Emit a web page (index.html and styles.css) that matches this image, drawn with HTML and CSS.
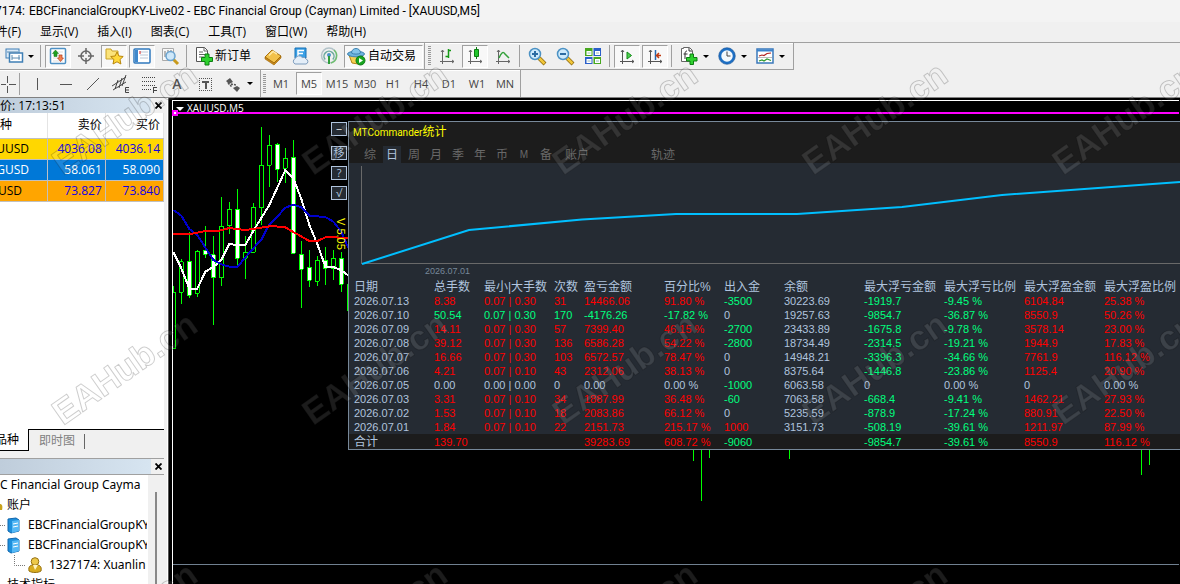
FILE: index.html
```html
<!DOCTYPE html>
<html lang="zh-CN">
<head>
<meta charset="utf-8">
<title>EBC Financial Group - XAUUSD,M5</title>
<link rel="stylesheet" href="styles.css">
</head>
<body>
<header class="titlebar"><span class="lead lead-title">7174:</span><span>EBCFinancialGroupKY-Live02 - EBC Financial Group (Cayman) Limited - [XAUUSD,M5]</span></header>
<nav class="menu">
<button class="lead lead-menu">件(F)</button><button>显示(V)</button><button>插入(I)</button><button>图表(C)</button><button>工具(T)</button><button>窗口(W)</button><button>帮助(H)</button>
</nav>

<div class="toolbar">
<div class="group group-main">
<button class="tool" aria-label="新图表"><svg width="20" height="20" viewBox="0 0 20 20"><rect x="2" y="3" width="13" height="9" fill="#dcebf8" stroke="#3f7fb5"/><rect x="5.500" y="7" width="13" height="9" fill="#fff" stroke="#3f7fb5" stroke-width="1.500"/><path d="M8 9v5M15 9v5M8 12h8M3 6h11" stroke="#5a8ab0" fill="none"/></svg></button>
<button class="drop" aria-label="图表列表"></button>
<i class="sep"></i>
<button class="tool on" aria-label="市场报价"><svg width="20" height="20" viewBox="0 0 20 20"><rect x="2.500" y="2.500" width="15" height="15" rx="1" fill="#fff" stroke="#4d90c4" stroke-width="1.500"/><path d="M5 6h10M5 9h10M5 12h10M5 15h10" stroke="#ddd"/><path d="M7.500 4l3 3.500H9v3H6v-3H4.500z" fill="#20a020" stroke="#107010" stroke-width=".5"/><path d="M12.500 15.500l-3-3.500H11V9h3v3h1.500z" fill="#f08050" stroke="#b03010" stroke-width=".6"/></svg></button>
<button class="tool" aria-label="数据窗口"><svg width="20" height="20" viewBox="0 0 20 20" fill="none" stroke="#666"><circle cx="10" cy="10" r="5" stroke-width="1.500"/><path d="M10 2v6M10 12v6M2 10h6M12 10h6" stroke-width="1.500"/></svg></button>
<button class="tool on" aria-label="导航"><svg width="20" height="20" viewBox="0 0 20 20"><path d="M2 13V3h5l1 2h6v8z" fill="#fbe37a" stroke="#c9a227"/><path d="M13 6l1.900 4 4.300.5-3.200 3 .9 4.500-3.900-2.200L9 18l.9-4.500-3.200-3 4.400-.5z" fill="#ffd83a" stroke="#b8860b"/></svg></button>
<button class="tool on" aria-label="终端"><svg width="20" height="20" viewBox="0 0 20 20"><rect x="2" y="3" width="16" height="14" rx="1" fill="#fff" stroke="#2f78bd" stroke-width="1.500"/><path d="M3 4h3v12H3z" fill="#3f88cc"/><path d="M8 6h8M8 9h8M8 12h8" stroke="#b9c6d6"/><path d="M8 5v3" stroke="#e02020"/></svg></button>
<button class="tool" aria-label="策略测试"><svg width="20" height="20" viewBox="0 0 20 20"><path d="M2.500 2.500h11v12h-11z" fill="#f8f8f8" stroke="#aaa"/><path d="M5 5v6M8 4v5M11 4v3" stroke="#777"/><path d="M13.500 13.500l4.500 4.500" stroke="#c89a1c" stroke-width="3"/><circle cx="10.500" cy="10" r="4.500" fill="#c9e6fa" fill-opacity=".9" stroke="#6aa3cf" stroke-width="1.500"/></svg></button>
<i class="sep"></i>
<button class="tool wide" aria-label="新订单"><svg width="20" height="20" viewBox="0 0 20 20"><path d="M2.500 1.500h8l3 3v11h-11z" fill="#fff" stroke="#555"/><path d="M10 1.500v3.500h3.500M5 6h4M5 8.500h6M5 11h5" stroke="#666" fill="none"/><path d="M11 8h4v3.500h3.500v4H15V19h-4v-3.500H7.500v-4H11z" fill="#2ed12e" stroke="#0d7d12"/></svg><span>新订单</span></button>
<button class="tool" aria-label="MetaEditor"><svg width="20" height="20" viewBox="0 0 20 20"><path d="M2 11l7-7 9 6-7 7z" fill="#f2c14a" stroke="#a8700e"/><path d="M2 11v2l9 6 7-7v-2l-7 7z" fill="#c98a17" stroke="#9a640c" stroke-width=".6"/><path d="M6 9.500l4-4 4 2.700" stroke="#ffe9a5" fill="none" stroke-width="1.500"/></svg></button>
<button class="tool" aria-label="社区"><svg width="20" height="20" viewBox="0 0 20 20"><path d="M4 2h11v10H4z" fill="#3aa0e6" stroke="#1670b5"/><path d="M7 12V4.500h6M7 7.500h5" stroke="#fff" stroke-width="1.500" fill="none"/><path d="M4 18a3 3 0 0 1 .3-5.500 4 4 0 0 1 7-1 3 3 0 0 1 3.700 1.500 2.600 2.600 0 0 1 0 5z" fill="#e4eef8" stroke="#7d9cbd"/></svg></button>
<button class="tool" aria-label="信号"><svg width="20" height="20" viewBox="0 0 20 20" fill="none"><circle cx="10" cy="9.500" r="7.500" stroke="#b3c3c9" stroke-width="1.500"/><path d="M6.200 13.500a5 5 0 1 1 7.600 0" stroke="#6eaa9f" stroke-width="1.500"/><path d="M15 4a7.500 7.500 0 0 1-3 13" stroke="#6fbf6f" stroke-width="1.500"/><circle cx="10" cy="9" r="2" fill="#4b93c9"/><path d="M10 10v8" stroke="#2f9e3c" stroke-width="2"/></svg></button>
<button class="tool on auto"><svg width="20" height="20" viewBox="0 0 20 20"><path d="M3 9l3 8 6 1 5-9z" fill="#f5cf52" stroke="#b08414"/><ellipse cx="10" cy="8" rx="8.500" ry="2.800" fill="#6db3de" stroke="#3d82b0"/><path d="M5.500 7c0-6 9-6 9 0-2 1.500-7 1.500-9 0z" fill="#84c4ea" stroke="#3d82b0"/><circle cx="14.500" cy="14.500" r="4.500" fill="#19a51f" stroke="#0d7a15"/><path d="M13 12l4 2.500-4 2.500z" fill="#fff"/></svg><span>自动交易</span></button>
</div>
<div class="group group-chart">
<i class="grip"></i>
<button class="tool" aria-label="柱状图"><svg width="20" height="20" viewBox="0 0 20 20" fill="none" stroke="#666"><path d="M5.500 4v14M3 15.500h14M4 6l1.500-2L7 6M15 14l2 1.500-2 1.500"/><path d="M11.500 3v9M8.500 10.500h3M11.500 4.500H14" stroke="#159915" stroke-width="1.500"/></svg></button>
<button class="tool on" aria-label="蜡烛图"><svg width="20" height="20" viewBox="0 0 20 20" fill="none" stroke="#666"><path d="M5.500 4v14M3 15.500h14M4 6l1.500-2L7 6M15 14l2 1.500-2 1.500"/><path d="M11.500 1v12" stroke="#0a7d10"/><path d="M9.500 3.500h4v7h-4z" fill="#21c52b" stroke="#0a7d10"/></svg></button>
<button class="tool" aria-label="折线图"><svg width="20" height="20" viewBox="0 0 20 20" fill="none" stroke="#666"><path d="M5.500 4v14M3 15.500h14M4 6l1.500-2L7 6M15 14l2 1.500-2 1.500"/><path d="M6 12c2-5 4-7 6-4l4 4" stroke="#32a03a" stroke-width="1.500"/></svg></button>
<i class="sep"></i>
<button class="tool" aria-label="放大"><svg width="20" height="20" viewBox="0 0 20 20"><path d="M12 12l6 6" stroke="#8f6a10" stroke-width="4"/><path d="M12 12l5.500 5.500" stroke="#f1c73a" stroke-width="2.500"/><circle cx="8" cy="8" r="5.500" fill="#cdeafc" stroke="#4c92c4" stroke-width="1.500"/><path d="M8 5v6M5 8h6" stroke="#2b6ca3" stroke-width="2"/></svg></button>
<button class="tool" aria-label="缩小"><svg width="20" height="20" viewBox="0 0 20 20"><path d="M12 12l6 6" stroke="#8f6a10" stroke-width="4"/><path d="M12 12l5.500 5.500" stroke="#f1c73a" stroke-width="2.500"/><circle cx="8" cy="8" r="5.500" fill="#cdeafc" stroke="#4c92c4" stroke-width="1.500"/><path d="M5 8h6" stroke="#2b6ca3" stroke-width="2"/></svg></button>
<button class="tool" aria-label="平铺"><svg width="20" height="20" viewBox="0 0 20 20"><path d="M2 2h7.500v8H2zM10.500 11H18v7h-7.500z" fill="#48a81f"/><path d="M10.500 2H18v8h-7.500zM2 11h7.500v7H2z" fill="#2a5fc9"/><path d="M3.500 5h5v4h-5zM12 5h5v4h-5zM3.500 13h5v4h-5zM12 13h5v4h-5z" fill="#fff"/><path d="M4.500 7h3M13 7h3M4.500 15h3M13 15h3" stroke="#9bb"/></svg></button>
<i class="sep"></i>
<button class="tool on" aria-label="自动滚动"><svg width="20" height="20" viewBox="0 0 20 20" fill="none" stroke="#555"><path d="M5.500 4v14M3 15.500h14M4 6l1.500-2L7 6M15 14l2 1.500-2 1.500"/><path d="M10 6l4.500 3.500L10 13z" fill="#4fd04f" stroke="#128a18"/></svg></button>
<button class="tool on" aria-label="图表平移"><svg width="20" height="20" viewBox="0 0 20 20" fill="none" stroke="#555"><path d="M5.500 4v14M3 15.500h14M4 6l1.500-2L7 6M15 14l2 1.500-2 1.500"/><path d="M10.500 4v10" stroke="#2468b0" stroke-width="1.500"/><path d="M16 9.500h-4M14 7l-2.500 2.500L14 12" stroke="#c03a10" stroke-width="1.500"/></svg></button>
<i class="sep"></i>
<button class="tool" aria-label="指标"><svg width="20" height="20" viewBox="0 0 20 20"><path d="M2.500 2.500h2v-1h6l3 3v11h-11z" fill="#fff" stroke="#666"/><path d="M10 2v3h3M8 5c-1.500 0-2 1-2 3v5M4.500 8h4" stroke="#333" fill="none"/><path d="M11 8h3.500v3.500H18V15h-3.500v3.500H11V15H7.500v-3.500H11z" fill="#2ed12e" stroke="#0d7d12"/></svg></button>
<button class="drop" aria-label="指标列表"></button>
<button class="tool" aria-label="周期"><svg width="20" height="20" viewBox="0 0 20 20"><circle cx="10" cy="10" r="7" fill="#f4f9fd" stroke="#1d6fc4" stroke-width="2.500"/><circle cx="10" cy="10" r="8.300" fill="none" stroke="#134f94" stroke-width=".6"/><path d="M10 5.500V10h3.500" stroke="#444" fill="none"/></svg></button>
<button class="drop" aria-label="周期列表"></button>
<button class="tool" aria-label="模板"><svg width="20" height="20" viewBox="0 0 20 20" fill="none"><rect x="2" y="3" width="16" height="14" fill="#fff" stroke="#3a78ba" stroke-width="1.500"/><path d="M2 4.500h16" stroke="#3a82cc" stroke-width="2"/><path d="M4 10l3-1 2 .5 3-2 4-.5" stroke="#b02020" stroke-width="1.200"/><path d="M3 11.500h14" stroke="#bbb"/><path d="M4 15l3-1 2 1 3-2 4 1.500" stroke="#2f9a2f" stroke-width="1.200"/></svg></button>
<button class="drop" aria-label="模板列表"></button>
</div>
</div>

<div class="toolbar second">
<div class="group group-draw">
<button class="tool lead lead-cross" aria-label="十字线"><svg width="20" height="20" viewBox="0 0 20 20" stroke="#555" shape-rendering="crispEdges"><path d="M8.500 2v7M8.500 12v7M0 10.500h7M10 10.500h7"/></svg></button>
<i class="sep"></i>
<button class="tool" aria-label="垂直线"><svg width="20" height="20" viewBox="0 0 20 20" stroke="#555" shape-rendering="crispEdges"><path d="M10.500 4v12"/></svg></button>
<button class="tool" aria-label="水平线"><svg width="20" height="20" viewBox="0 0 20 20" stroke="#555" shape-rendering="crispEdges"><path d="M5 10.500h12"/></svg></button>
<button class="tool" aria-label="趋势线"><svg width="20" height="20" viewBox="0 0 20 20" stroke="#555"><path d="M4 16L16 4"/></svg></button>
<button class="tool" aria-label="通道"><svg width="20" height="20" viewBox="0 0 20 20" stroke="#444" fill="none"><path d="M1 12L15 3M2 16L15 8M4 15l3-9M8 14l3-10M11 12l4-11"/><path d="M18 13.500h-3.500v5H18M14.500 16H18"/></svg></button>
<button class="tool" aria-label="斐波那契"><svg width="20" height="20" viewBox="0 0 20 20" stroke="#444" fill="none" shape-rendering="crispEdges"><path d="M3 3.500h13M3 7.500h13M3 11.500h13M3 15.500h9" stroke-dasharray="1 1"/><path d="M18 13.500h-3.500v5M14 16h3.500"/></svg></button>
<button class="tool glyph" aria-label="文字">A</button>
<button class="tool" aria-label="文字标签"><svg width="20" height="20" viewBox="0 0 20 20" fill="none" stroke="#555" shape-rendering="crispEdges"><path d="M4 4.500h13M4 16.500h13M4.500 4v13M16.500 4v13" stroke-dasharray="1 1"/><path d="M7 8h7M10.500 7v8" stroke-width="2"/></svg></button>
<button class="tool" aria-label="箭头"><svg width="20" height="20" viewBox="0 0 20 20" fill="#555"><path d="M3 7l4-3 3 4-4 2zM10 14l4-2 3 2-3 4z"/><path d="M5 9l4 4M8 10l5 1" stroke="#555" stroke-width="1.500" stroke-dasharray="2 1"/></svg></button>
<button class="drop" aria-label="箭头列表"></button>
</div>
<div class="group group-time">
<i class="grip"></i>
<button class="tool">M1</button><button class="tool on">M5</button><button class="tool">M15</button><button class="tool">M30</button><button class="tool">H1</button><button class="tool">H4</button><button class="tool">D1</button><button class="tool">W1</button><button class="tool">MN</button>
</div>
</div>

<main class="work">
<aside class="side">
<section class="market">
<div class="panel-head"><div class="cap">价: 17:13:51</div><button class="close" aria-label="关闭报价"><svg width="7" height="7" viewBox="0 0 7 7"><path d="M.5.500l6 6M6.500.500l-6 6" stroke="#000" stroke-width="1.800"/></svg></button></div>
<table class="quotes">
<colgroup><col class="q1"><col class="q2"><col class="q2"></colgroup>
<thead><tr><th><span class="lead w12">种</span></th><th>卖价</th><th>买价</th></tr></thead>
<tbody>
<tr class="gold"><td><span class="lead w29">UUSD</span></td><td>4036.08</td><td>4036.14</td></tr>
<tr class="sel"><td><span class="lead w29">GUSD</span></td><td>58.061</td><td>58.090</td></tr>
<tr class="orange"><td><span class="lead w22">USD</span></td><td>73.827</td><td>73.840</td></tr>
</tbody>
</table>
<div class="tabs"><button class="active"><span class="lead w19">品种</span></button><button>即时图</button></div>
</section>
<section class="navigator">
<div class="panel-head"><div class="cap"></div><button class="close" aria-label="关闭导航"><svg width="7" height="7" viewBox="0 0 7 7"><path d="M.5.500l6 6M6.500.500l-6 6" stroke="#000" stroke-width="1.800"/></svg></button></div>
<div class="tree-box">
<ul class="tree">
<li>C Financial Group Cayma</li>
<li class="lv1"><svg class="bit" width="3" height="14" viewBox="0 0 3 14"><path d="M0 6c2 0 3 2 2 6H0z" fill="#c9a21c"/></svg>账户</li>
<li class="lv2"><svg width="28" height="20" viewBox="0 0 28 20"><path d="M0 10.500h6" stroke="#777" stroke-dasharray="1 1"/><path d="M8 4l8-1 3 2v11l-8 2-3-2z" fill="#1c8fdc" stroke="#1166ad"/><path d="M12 6l7-1v11l-7 2z" fill="#55b8f5"/><path d="M13 9l5-1M13 12l5-1" stroke="#fff"/></svg>EBCFinancialGroupKY</li>
<li class="lv2"><svg width="28" height="20" viewBox="0 0 28 20"><path d="M0 10.500h6" stroke="#777" stroke-dasharray="1 1"/><path d="M8 4l8-1 3 2v11l-8 2-3-2z" fill="#1c8fdc" stroke="#1166ad"/><path d="M12 6l7-1v11l-7 2z" fill="#55b8f5"/><path d="M13 9l5-1M13 12l5-1" stroke="#fff"/></svg>EBCFinancialGroupKY</li>
<li class="lv2"><svg width="49" height="20" viewBox="0 0 49 20"><path d="M14.500 0v10.500H26" fill="none" stroke="#777" stroke-dasharray="1 1"/><path d="M29 16c-1-5 2-6 4-6h4c3 0 5 2 4 6-3 2-9 2-12 0z" fill="#d8ac20" stroke="#957012"/><circle cx="35" cy="6.500" r="3.800" fill="#edc84a" stroke="#957012"/><path d="M33 10l2 5 3-5" fill="#fff3c0"/></svg>1327174: Xuanlin</li>
<li class="lv1 last">技术指标</li>
</ul>
<div class="scroll"><i></i></div>
</div>
</section>
</aside>

<section class="chart">
<svg class="plot" aria-hidden="true">
<g transform="translate(-168 -98)">
<path d="M172.500 584V100.500H4000" fill="none" stroke="#fff" shape-rendering="crispEdges"/>
<path d="M176 107h8l-4 4z" fill="#fff"/>
<path d="M173 564.500H4000" stroke="#708090" shape-rendering="crispEdges"/>
<path d="M693.500 449v12M701.500 449v52M709.500 449v9M789.500 449v10M1141.500 449v26M1149.500 449v16" stroke="#0f0" shape-rendering="crispEdges"/>
<g transform="translate(165 95) scale(.33333)" stroke="#0f0" stroke-width="3" fill="none" shape-rendering="crispEdges">
<path d="M25 573v19h6v170h-6M49 491v10M49 592v35M73 412v196M97 464v5M97 595v11M121 392v98M145 423v267M169 306v88M169 548v25M193 321v22M193 392v24M217 282v231M241 423v49M241 490v62M265 324v13M289 96v115M289 338v52M313 120v31M313 211v65M337 144v118M361 158v32M361 220v44M385 135v340M409 438v201M433 465v110M457 484v12M457 559v15M481 456v114M505 466v24M505 520v36M529 472v118M548 568v80"/>
<path d="M43 500h12v92H43zM91 469h12v126H91zM163 394h12v154h-12zM187 343h12v49h-12zM235 472h12v18h-12zM259 337h12v135h-12zM283 211h12v127h-12zM307 151h12v60h-12zM355 190h12v30h-12zM451 496h12v63h-12zM499 490h12v30h-12z"/>
<path fill="#fff" d="M67 499h12v102H67zM115 467h12v11h-12zM139 479h12v69h-12zM211 343h12v147h-12zM331 148h12v75h-12zM379 187h12v288h-12zM403 478h12v45h-12zM427 517h12v39h-12zM475 496h12v24h-12zM523 490h12v78h-12z"/>
</g>
<g transform="translate(165 95) scale(.33333)" fill="none" stroke-width="6" shape-rendering="crispEdges">
<path stroke="#fff" d="M25 472 49 520 73 581H97L121 530 145 516 169 495 193 447 217 450H241L265 408 313 330 361 225 385 250 409 312 433 390 457 447 481 515 505 516 529 526 549 541"/>
<path stroke="#0000cd" d="M25 345 49 362 73 402 97 420 121 458 145 495 169 508 193 515 217 516 241 487 265 460 289 434 313 388 337 365 361 338 385 329 409 337 433 362 481 366 505 380 529 410 549 457"/>
<path stroke="#f00" d="M25 416H82L121 408H160L193 399 241 405 289 398 320 393 361 397 385 411 433 438H457L481 427 549 428"/>
</g>
</g>
</svg>
<div class="symbol">XAUUSD,M5</div>
<svg class="alert-line" aria-hidden="true"><path d="M4 5h4000" stroke="#f0f" stroke-width="2"/><rect x="5" y="3" width="4" height="4" fill="#fff" stroke="#f0f" stroke-width="2"/></svg>
<div class="overlay">
<div class="strip"><button class="minus">−</button><button>移</button><button>?</button><button>√</button><span class="ver">V 5.05</span></div>
<section class="stats">
<div class="stats-head">
<h1>MTCommander<span>统计</span></h1>
<div class="periods"><button>综</button><button class="now">日</button><button>周</button><button>月</button><button>季</button><button>年</button><button>币</button><button class="small">M</button><button>备</button><button class="acct">账户</button><button class="track">轨迹</button></div>
</div>
<svg class="equity" aria-hidden="true"><g transform="translate(-349 -163)"><path d="M361.500 166v97.500H4000" fill="none" stroke="#696969" shape-rendering="crispEdges"/><path d="M362 264 469 230 582 219.500 676 214H797L902 207 1002 195 1180 182" fill="none" stroke="#00bfff" stroke-width="2"/></g></svg>
<div class="axis-date">2026.07.01</div>
<table class="days">
<colgroup><col class="c80"><col class="c50"><col class="c70"><col class="c30"><col class="c80"><col class="c60"><col class="c60"><col class="c80"><col class="c80"><col class="c80"><col class="c80"><col></colgroup>
<thead><tr><th>日期</th><th>总手数</th><th>最小|大手数</th><th>次数</th><th>盈亏金额</th><th>百分比%</th><th>出入金</th><th>余额</th><th>最大浮亏金额</th><th>最大浮亏比例</th><th>最大浮盈金额</th><th>最大浮盈比例</th></tr></thead>
<tbody>
<tr class="up"><td>2026.07.13</td><td>8.38</td><td>0.07 | 0.30</td><td>31</td><td>14466.06</td><td>91.80 %</td><td class="g">-3500</td><td>30223.69</td><td>-1919.7</td><td>-9.45 %</td><td>6104.84</td><td>25.38 %</td></tr>
<tr class="down"><td>2026.07.10</td><td>50.54</td><td>0.07 | 0.30</td><td>170</td><td>-4176.26</td><td>-17.82 %</td><td>0</td><td>19257.63</td><td>-9854.7</td><td>-36.87 %</td><td>8550.9</td><td>50.26 %</td></tr>
<tr class="up"><td>2026.07.09</td><td>14.11</td><td>0.07 | 0.30</td><td>57</td><td>7399.40</td><td>46.15 %</td><td class="g">-2700</td><td>23433.89</td><td>-1675.8</td><td>-9.78 %</td><td>3578.14</td><td>23.00 %</td></tr>
<tr class="up"><td>2026.07.08</td><td>39.12</td><td>0.07 | 0.30</td><td>136</td><td>6586.28</td><td>54.22 %</td><td class="g">-2800</td><td>18734.49</td><td>-2314.5</td><td>-19.21 %</td><td>1944.9</td><td>17.83 %</td></tr>
<tr class="up"><td>2026.07.07</td><td>16.66</td><td>0.07 | 0.30</td><td>103</td><td>6572.57</td><td>78.47 %</td><td>0</td><td>14948.21</td><td>-3396.3</td><td>-34.66 %</td><td>7761.9</td><td>116.12 %</td></tr>
<tr class="up"><td>2026.07.06</td><td>4.21</td><td>0.07 | 0.10</td><td>43</td><td>2312.06</td><td>38.13 %</td><td>0</td><td>8375.64</td><td>-1446.8</td><td>-23.86 %</td><td>1125.4</td><td>20.90 %</td></tr>
<tr><td>2026.07.05</td><td>0.00</td><td>0.00 | 0.00</td><td>0</td><td>0.00</td><td>0.00 %</td><td class="g">-1000</td><td>6063.58</td><td>0</td><td>0.00 %</td><td>0</td><td>0.00 %</td></tr>
<tr class="up"><td>2026.07.03</td><td>3.31</td><td>0.07 | 0.10</td><td>34</td><td>1887.99</td><td>36.48 %</td><td class="g">-60</td><td>7063.58</td><td>-668.4</td><td>-9.41 %</td><td>1462.21</td><td>27.93 %</td></tr>
<tr class="up"><td>2026.07.02</td><td>1.53</td><td>0.07 | 0.10</td><td>18</td><td>2083.86</td><td>66.12 %</td><td>0</td><td>5235.59</td><td>-878.9</td><td>-17.24 %</td><td>880.91</td><td>22.50 %</td></tr>
<tr class="up"><td>2026.07.01</td><td>1.84</td><td>0.07 | 0.10</td><td>22</td><td>2151.73</td><td>215.17 %</td><td class="r">1000</td><td>3151.73</td><td>-508.19</td><td>-39.61 %</td><td>1211.97</td><td>87.99 %</td></tr>
</tbody>
<tfoot><tr class="up"><td>合计</td><td>139.70</td><td></td><td></td><td>39283.69</td><td>608.72 %</td><td class="g">-9060</td><td></td><td>-9854.7</td><td>-39.61 %</td><td>8550.9</td><td>116.12 %</td></tr></tfoot>
</table>
</section>
</div>
</section>
</main>

<svg class="marks" aria-hidden="true">
<g transform="translate(0 -2)"><text transform="translate(63 178) rotate(-35)">EAHub.cn</text><text transform="translate(313 178) rotate(-35)">EAHub.cn</text><text transform="translate(563 178) rotate(-35)">EAHub.cn</text><text transform="translate(813 178) rotate(-35)">EAHub.cn</text><text transform="translate(1063 178) rotate(-35)">EAHub.cn</text>
<text transform="translate(63 428) rotate(-35)">EAHub.cn</text><text transform="translate(313 428) rotate(-35)">EAHub.cn</text><text transform="translate(563 428) rotate(-35)">EAHub.cn</text><text transform="translate(813 428) rotate(-35)">EAHub.cn</text><text transform="translate(1063 428) rotate(-35)">EAHub.cn</text>
<text transform="translate(63 678) rotate(-35)">EAHub.cn</text><text transform="translate(313 678) rotate(-35)">EAHub.cn</text><text transform="translate(563 678) rotate(-35)">EAHub.cn</text><text transform="translate(813 678) rotate(-35)">EAHub.cn</text></g>
</svg>
</body>
</html>
```
FILE: styles.css
```css
* { box-sizing: border-box; }
body {
  margin: 0;
  height: 100vh;
  overflow: hidden;
  display: flex;
  flex-direction: column;
  background: #f0f0f0;
  color: #000;
  font: 12px/16px "Open Sans", "Noto Sans CJK SC", sans-serif;
}
button {
  margin: 0;
  padding: 0;
  border: 0;
  background: none;
  color: inherit;
  font: inherit;
  white-space: nowrap;
}
svg { display: block; flex: none; }
table { border-collapse: collapse; table-layout: fixed; width: 100%; }
th, td { padding: 0; font-weight: 400; text-align: left; white-space: nowrap; }

/* items whose start runs past the window's left edge */
.lead { display: flex; justify-content: flex-end; overflow: hidden; flex: none; }
.lead-title { width: 25px; }
.lead-menu { width: 21px; }
.w12 { width: 12px; }
.w19 { width: 19px; }
.w22 { width: 22px; }
.w29 { width: 29px; }

.titlebar { flex: none; display: flex; align-items: center; gap: 4px; height: 22px; background: #f3f3f3; font-family: Roboto, "Noto Sans CJK SC", sans-serif; white-space: nowrap; }
.menu { flex: none; display: flex; align-items: center; gap: 19px; height: 20px; }

.toolbar { flex: none; display: flex; height: 28px; border-top: 1px solid #a0a0a0; }
.toolbar.second { border-top: 0; border-bottom: 1px solid #808080; }
.group { display: flex; align-items: center; height: 100%; border-right: 1px solid #a0a0a0; border-bottom: 1px solid #a0a0a0; box-shadow: inset 0 1px #fff; }
.second .group { border-bottom: 0; }
.group-main { width: 425px; }
.group-chart { width: 369px; }
.group-draw { width: 261px; }
.group-time { width: 260px; }
.tool { flex: none; display: flex; align-items: center; justify-content: center; width: 26px; height: 23px; margin: 0 1px; border: 1px solid transparent; }
.tool.on { background: #f8f8f8; border-color: #a0a0a0 #fff #fff #a0a0a0; }
.tool.wide { width: 69px; margin: 0; justify-content: flex-start; padding-left: 3px; gap: 1px; }
.tool.auto { width: 79px; justify-content: flex-start; padding-left: 1px; gap: 2px; }
.tool.glyph { color: #555; font-size: 14px; font-weight: 600; }
.tool.lead-cross { width: 17px; margin: 0; }
.group-time .tool { color: #444; font-size: 11px; }
.drop { flex: none; width: 10px; height: 20px; display: flex; align-items: center; }
.drop::after { content: ""; border: 3px solid transparent; border-top-color: #000; border-bottom: 0; }
.sep { flex: none; width: 1px; height: 22px; margin: 0 3px 0 2px; background: #a0a0a0; }
.grip { flex: none; width: 3px; height: 20px; margin: 0 2px 0 3px; background: repeating-linear-gradient(#999 0 1px, #f0f0f0 1px 2px); }
.group-time .grip { margin: 0 1px 0 2px; }

.work { flex: 1; min-height: 0; display: grid; grid-template-columns: 168px 1fr; }
.side { min-height: 0; display: flex; flex-direction: column; border-right: 1px solid #fff; }
.market { flex: 1; display: flex; flex-direction: column; width: 164px; background: #fff; }
.panel-head { flex: none; display: flex; height: 15px; background: #f0f0f0; }
.cap { width: 151px; overflow: hidden; background: linear-gradient(90deg, #bfcddb, #d7e5f1); line-height: 15px; white-space: nowrap; }
.close { flex: 1; display: flex; align-items: center; justify-content: flex-end; padding-right: 2px; }
.quotes { flex: none; font-size: 12px; }
.q1 { width: 47px; }
.quotes th { height: 25px; border-right: 1px solid #e4e4e4; border-bottom: 1px solid #c0c0c0; }
.quotes td { height: 21px; border-right: 1px solid #c0c0c0; border-bottom: 1px solid #c0c0c0; }
.quotes th + th, .quotes td + td { text-align: right; padding-right: 3px; }
.quotes td + td { color: #1400e0; }
.gold { background: #ffd700; }
.orange { background: #ffa500; }
.quotes .sel, .quotes .sel td { background: #0078d7; color: #fff; }
.tabs { display: flex; height: 29px; margin-top: auto; background: #f0f0f0; padding-bottom: 6px; box-shadow: inset 0 1px #000; }
.tabs button { height: 22px; padding: 0 10px; border-top: 1px solid #000; color: #808080; position: relative; }
.tabs .active { padding: 0; width: 29px; background: #fff; border-top: 0; border-right: 1px solid #000; border-bottom: 1px solid #000; color: #000; }
.tabs button + button::after { content: ""; position: absolute; right: 0; top: 4px; height: 15px; border-right: 1px solid #666; }

.navigator { flex: none; height: 126px; border-top: 1px solid #a0a0a0; overflow: hidden; width: 164px; }
.tree-box { display: flex; height: 110px; border-top: 1px solid #a0a0a0; }
.tree { flex: 1; min-width: 0; margin: 0; padding: 0; list-style: none; background: #fff; overflow: hidden; font-family: "Noto Sans", "Noto Sans CJK SC", sans-serif; }
.tree li { display: flex; align-items: center; height: 20px; white-space: nowrap; overflow: hidden; width: 147px; }
.tree .lv1 { padding-left: 7px; }
.tree .lv1 .bit { margin: 0 4px 0 -7px; }
.scroll { width: 16px; background: #f0f0f0; padding: 17px 0 0 7px; }
.scroll i { display: block; width: 2px; height: 100%; background: #888; }

.chart { position: relative; min-width: 0; overflow: hidden; background: #000; border-left: 1px solid #555; display: flex; flex-direction: column; }
.plot { position: absolute; inset: 0 0 0 -1px; width: 100%; height: 100%; }
.symbol { position: relative; height: 10px; margin: 5px 0 0 18px; line-height: 10px; font-size: 10px; color: #fff; }
.alert-line { position: absolute; top: 10px; left: -1px; width: 100%; height: 10px; }
.overlay { position: relative; display: flex; padding: 8px 0 0 162px; }
.strip { width: 17px; padding-top: 1px; display: flex; flex-direction: column; gap: 6px; align-items: flex-start; color: #b0c4de; font-size: 11px; line-height: 12px; }
.strip button { width: 16px; height: 14px; border: 1px solid #b0c4de; background: #252b33; }
.strip .minus { margin-bottom: 4px; color: #fff; }
.ver { writing-mode: vertical-rl; margin: 12px 0 0 4px; color: #ff0; font-family: "Liberation Sans", sans-serif; }
.stats { flex: 1; min-width: 0; overflow: hidden; background: #252b33; border: 1px solid #778899; border-right: 0; color: #b0c4de; font: 11px/14px "Liberation Sans", "Noto Sans CJK SC", sans-serif; }
.stats-head { height: 41px; padding: 2px 0 0 4px; background: #1c1c1c; }
.stats h1 { margin: 0; height: 16px; color: #ff0; font: 400 10px/16px Roboto, "Noto Sans CJK SC", sans-serif; }
.stats h1 span { font-size: 12px; }
.periods { display: flex; gap: 4px; padding: 6px 0 0 8px; color: #696969; font-size: 12px; }
.periods button { width: 18px; height: 17px; line-height: 16px; }
.periods .now { background: #252b33; color: #b0c4de; }
.periods .small { font-size: 10px; }
.periods .acct { width: 36px; }
.periods .track { width: 36px; margin-left: 46px; }
.equity { width: 100%; height: 103px; }
.axis-date { padding-left: 76px; color: #778899; font-size: 9px; line-height: 10px; }
.days { margin-top: 4px; }
.c30 { width: 30px; }
.c50 { width: 50px; }
.c60 { width: 60px; }
.c70 { width: 70px; }
.c80 { width: 80px; }
.days col:first-child { width: 85px; }
.days tr > :first-child { padding-left: 5px; }
.days th { height: 14px; font-size: 12px; }
.days td { height: 14px; line-height: 14px; }
.up td, .r { color: #f00; }
.down td { color: #00ff7f; }
.days td.g { color: #00ff7f; }
.up td:nth-child(9), .up td:nth-child(10) { color: #00ff7f; }
.down td:nth-child(11), .down td:nth-child(12) { color: #f00; }
.days td:first-child, .days td:nth-child(8), .days td:nth-child(7):not(.g):not(.r) { color: #b0c4de; }
.days tfoot { background: #1c1c1c; }
.days tfoot td { height: 15px; padding-top: 1px; }
.days tfoot td:first-child { font-size: 12px; }

.marks { position: fixed; inset: 0; width: 100%; height: 100%; pointer-events: none; }
.marks text { font: 700 35px "Liberation Sans", sans-serif; fill: #fff; fill-opacity: .11; stroke: #000; stroke-opacity: .2; stroke-width: 1; stroke-linejoin: round; }
```
